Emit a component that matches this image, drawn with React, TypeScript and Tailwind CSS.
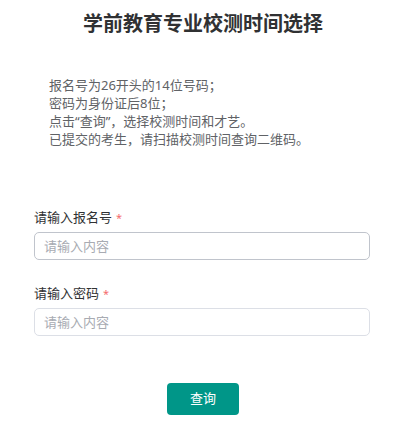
const tips = [
  "报名号为26开头的14位号码；",
  "密码为身份证后8位；",
  "点击“查询”，选择校测时间和才艺。",
  "已提交的考生，请扫描校测时间查询二维码。",
];

function Field({ label, hover }: { label: string; hover?: boolean }) {
  return (
    <div>
      <label className="block text-[13px] leading-[18px] text-[#303133]">
        {label}
        <span className="ml-[4px] text-[11px] text-[#f56c6c]">*</span>
      </label>
      <input
        type="text"
        placeholder="请输入内容"
        className={
          "mt-[5px] block h-[28px] w-[336px] rounded-[5px] border bg-white px-[9px] text-[13px] text-[#606266] outline-none placeholder:text-[#a8abb2] " +
          (hover ? "border-[#c0c4cc]" : "border-[#dcdfe6]")
        }
      />
    </div>
  );
}

export default function App() {
  return (
    <div
      className="h-[430px] w-[406px] bg-white"
      style={{ fontFamily: '"Noto Sans", "Noto Sans CJK SC", sans-serif' }}
    >
      <h1 className="pt-[10px] text-center text-[20px] font-bold leading-[28px] text-[#303133]">
        学前教育专业校测时间选择
      </h1>

      <div className="mt-[38px] pl-[49px] text-[13px] leading-[18px] text-[#606266]">
        {tips.map((t) => (
          <p key={t}>{t}</p>
        ))}
      </div>

      <form className="mt-[60px] px-[34px]" onSubmit={(e) => e.preventDefault()}>
        <Field label="请输入报名号" hover />
        <div className="mt-[24px]">
          <Field label="请输入密码" />
        </div>
        <div className="mt-[47px] flex justify-center">
          <button
            type="submit"
            className="h-[32px] w-[72px] rounded-[4px] bg-[#009688] text-[13px] text-white"
          >
            查询
          </button>
        </div>
      </form>
    </div>
  );
}
